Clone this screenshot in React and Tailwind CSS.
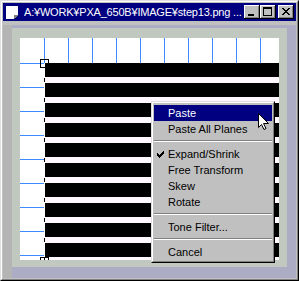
import React from "react";

const FONT = { fontFamily: '"Liberation Sans", Arial, sans-serif' };

function TitleBtn({ kind }) {
  const xs = [];
  if (kind === "close") {
    for (let i = 0; i < 7; i++) {
      xs.push(<rect key={"a" + i} x={4 + i} y={3 + i} width={2} height={1} fill="#000" />);
      xs.push(<rect key={"b" + i} x={10 - i} y={3 + i} width={2} height={1} fill="#000" />);
    }
  }
  return (
    <svg width="16" height="14" viewBox="0 0 16 14" shapeRendering="crispEdges" className="block">
      <rect x="0" y="0" width="16" height="14" fill="#c0c0c0" />
      <rect x="0" y="0" width="15" height="1" fill="#fff" />
      <rect x="0" y="0" width="1" height="13" fill="#fff" />
      <rect x="1" y="12" width="14" height="1" fill="#808080" />
      <rect x="14" y="1" width="1" height="12" fill="#808080" />
      <rect x="0" y="13" width="16" height="1" fill="#000" />
      <rect x="15" y="0" width="1" height="14" fill="#000" />
      {kind === "min" && <rect x="4" y="9" width="6" height="2" fill="#000" />}
      {kind === "max" && (
        <g fill="#000">
          <rect x="3" y="2" width="9" height="2" />
          <rect x="3" y="2" width="1" height="9" />
          <rect x="11" y="2" width="1" height="9" />
          <rect x="3" y="10" width="9" height="1" />
        </g>
      )}
      {xs}
    </svg>
  );
}

function MenuItem({ label, active, checked }) {
  return (
    <div
      className={
        "relative h-[16px] flex items-center pl-[14px] text-[11px] leading-none " +
        (active ? "bg-[#000080] text-white" : "text-black")
      }
    >
      {checked && (
        <svg width="7" height="7" viewBox="0 0 7 7" shapeRendering="crispEdges" className="absolute left-[3px] top-[5px]">
          <g fill="#000">
            <rect x="0" y="2" width="1" height="3" />
            <rect x="1" y="3" width="1" height="3" />
            <rect x="2" y="4" width="1" height="3" />
            <rect x="3" y="3" width="1" height="3" />
            <rect x="4" y="2" width="1" height="3" />
            <rect x="5" y="1" width="1" height="3" />
            <rect x="6" y="0" width="1" height="3" />
          </g>
        </svg>
      )}
      <span>{label}</span>
    </div>
  );
}

function Sep() {
  return (
    <div className="h-[9px] pt-[3px]">
      <div className="h-[1px] bg-[#808080]" />
      <div className="h-[1px] bg-white" />
    </div>
  );
}

export default function App() {
  const cols = Array.from({ length: 10 });
  const rows = Array.from({ length: 9 });
  const stripes = Array.from({ length: 10 });
  return (
    <div className="relative w-[299px] h-[281px] bg-[#c0c0c0]" style={FONT}>
      {/* window frame */}
      <div className="w-full h-full border border-t-[#dfdfdf] border-l-[#dfdfdf] border-r-black border-b-black">
        <div className="w-full h-full border border-t-white border-l-white border-r-[#808080] border-b-[#808080] p-[1px] flex flex-col">
          {/* title bar */}
          <div className="h-[18px] bg-[#000080] flex items-center pl-[3px] pr-[2px] shrink-0">
            <svg width="12" height="13" viewBox="0 0 12 13" shapeRendering="crispEdges" className="block shrink-0">
              <polygon points="0,0 12,0 12,9 9,13 0,13" fill="#fff" />
              <polygon points="8,13 8,9 12,9" fill="#808080" />
              <rect x="8" y="12" width="1" height="1" fill="#404040" />
            </svg>
            <div className="ml-[6px] text-white text-[11px] leading-none whitespace-nowrap tracking-[-0.2px] flex-1 overflow-hidden">
              A:¥WORK¥PXA_650B¥IMAGE¥step13.png ...
            </div>
            <div className="flex items-center">
              <TitleBtn kind="min" />
              <TitleBtn kind="max" />
              <div className="w-[2px]" />
              <TitleBtn kind="close" />
            </div>
          </div>
          <div className="h-[4px] shrink-0" />
          {/* client area */}
          <div className="flex-1 flex">
            <div className="w-[9px] bg-[#b4b4b4]" />
            <div className="flex-1 bg-[#acacc4] pt-[3px] pr-[8px]">
              <div className="w-[275px] h-[239px] bg-[#c0c8c0] pl-[8px] pt-[10px]">
                <div className="relative w-[259px] h-[222px] bg-white overflow-hidden flex flex-col">
                  {/* top ruler */}
                  <div className="h-[25px] flex shrink-0">
                    <div className="w-[24px] shrink-0" />
                    {cols.map((_, i) => (
                      <div key={i} className="w-[24px] h-full shrink-0 border-l border-[#3d8bff]" />
                    ))}
                  </div>
                  <div className="flex flex-1 overflow-hidden">
                    <div className="w-[24px] shrink-0 flex flex-col">
                      {rows.map((_, i) => (
                        <div key={i} className="h-[24px] shrink-0 border-t border-[#3d8bff]" />
                      ))}
                    </div>
                    <div className="w-[1px] shrink-0 flex flex-col">
                      {stripes.map((_, i) => (
                        <div key={i} className="h-[20px] shrink-0 pt-[15px]">
                          <div className="h-[4px] bg-black" />
                        </div>
                      ))}
                    </div>
                    <div className="flex-1 flex flex-col">
                      {stripes.map((_, i) => (
                        <React.Fragment key={i}>
                          <div className="h-[14px] shrink-0 bg-black" />
                          <div className="h-[6px] shrink-0 bg-[#fff8ff]" />
                        </React.Fragment>
                      ))}
                    </div>
                  </div>
                  {/* handles */}
                  <div className="absolute left-[20px] top-[21px] w-[9px] h-[9px] border border-black" />
                  <div className="absolute left-[20px] top-[219px] w-[9px] h-[9px] border border-black" />
                </div>
              </div>
            </div>
          </div>
        </div>
      </div>

      {/* context menu */}
      <div className="absolute left-[151px] top-[101px] w-[124px] bg-[#c0c0c0] border border-t-[#dfdfdf] border-l-[#dfdfdf] border-r-black border-b-black">
        <div className="border border-t-white border-l-white border-r-[#808080] border-b-[#808080] px-[1px] pt-[2px] pb-[1px]">
          <MenuItem label="Paste" active />
          <MenuItem label="Paste All Planes" />
          <Sep />
          <MenuItem label="Expand/Shrink" checked />
          <MenuItem label="Free Transform" />
          <MenuItem label="Skew" />
          <MenuItem label="Rotate" />
          <Sep />
          <MenuItem label="Tone Filter..." />
          <Sep />
          <MenuItem label="Cancel" />
        </div>
      </div>

      {/* mouse cursor */}
      <svg width="12" height="18" viewBox="0 0 12 18" className="absolute left-[258px] top-[113px]">
        <path d="M0.5 0.5 V14.5 L3.5 11.5 L6 16.5 L8 15.5 L5.5 10.5 H10.5 Z" fill="#fff" stroke="#000" strokeWidth="1" strokeLinejoin="miter" />
      </svg>
    </div>
  );
}
